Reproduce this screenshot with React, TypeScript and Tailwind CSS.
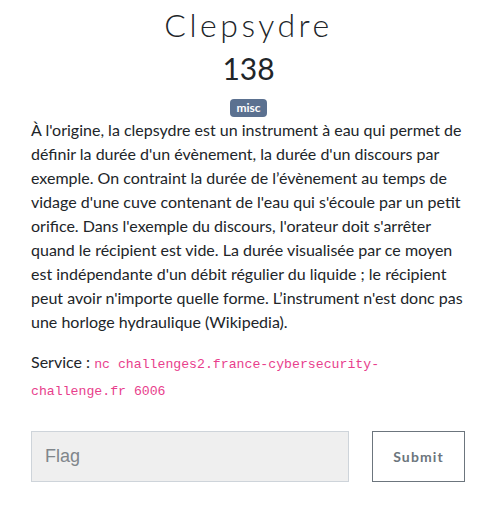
export default function App() {
  return (
    <div className="min-h-[527px] bg-white px-[31px] pt-[6px] text-[#212529]" style={{ fontFamily: 'Lato, "Open Sans", sans-serif' }}>
      <div className="text-center">
        <h1 className="text-[32px] font-light leading-[1.2] tracking-[0.11em]">Clepsydre</h1>
        <p className="mt-[6px] text-[30px] leading-[1.2]">138</p>
        <div className="mt-[13px] flex justify-center">
          <span className="flex h-[18px] items-center rounded-[4px] bg-[#5b7190] px-[6px] text-[12px] font-bold text-white">
            misc
          </span>
        </div>
      </div>
      <p className="mt-[1px] text-[16px] leading-[24px]">
        À l'origine, la clepsydre est un instrument à eau qui permet de définir la durée d'un évènement, la durée d'un discours par
        exemple. On contraint la durée de l’évènement au temps de vidage d'une cuve contenant de l'eau qui s'écoule par un petit
        orifice. Dans l'exemple du discours, l'orateur doit s'arrêter quand le récipient est vide. La durée visualisée par ce moyen
        est indépendante d'un débit régulier du liquide ; le récipient peut avoir n'importe quelle forme. L’instrument n'est donc pas
        une horloge hydraulique (Wikipedia).
      </p>
      <p className="mt-[16px] pr-[70px] text-[16px] leading-[24px]">
        Service :{' '}
        <code className="text-[13.2px] text-[#e83e8c]" style={{ fontFamily: '"Liberation Mono", monospace' }}>
          nc challenges2.france-cybersecurity-challenge.fr 6006
        </code>
      </p>
      <form className="mt-[27px] flex items-stretch gap-[23px]" onSubmit={(e) => e.preventDefault()}>
        <input
          type="text"
          placeholder="Flag"
          className="h-[51px] w-[318px] border border-[#ced4da] bg-[#efefef] px-[13px] text-[18px] text-[#495057] placeholder:text-[#80868b] outline-none"
          style={{ fontFamily: '"Liberation Sans", Arial, sans-serif' }}
        />
        <button
          type="submit"
          className="h-[51px] w-[93px] border border-[#6c757d] bg-white text-[14px] font-bold tracking-[0.08em] text-[#6c757d]"
        >
          Submit
        </button>
      </form>
    </div>
  )
}
